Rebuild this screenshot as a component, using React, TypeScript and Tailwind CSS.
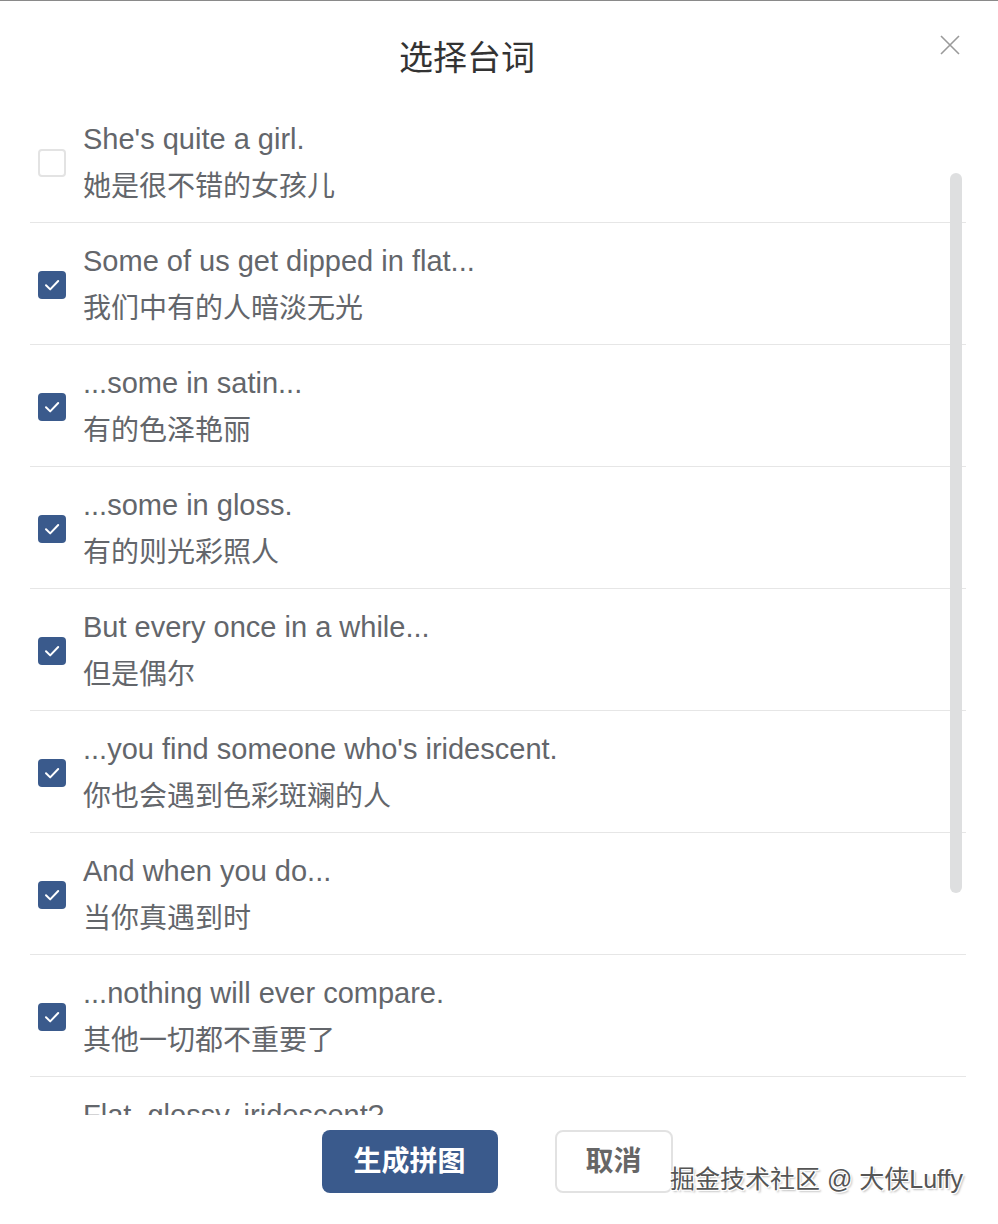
import React from "react";

const rows: { en: string; zh: string; checked: boolean }[] = [
  { en: "She's quite a girl.", zh: "她是很不错的女孩儿", checked: false },
  { en: "Some of us get dipped in flat...", zh: "我们中有的人暗淡无光", checked: true },
  { en: "...some in satin...", zh: "有的色泽艳丽", checked: true },
  { en: "...some in gloss.", zh: "有的则光彩照人", checked: true },
  { en: "But every once in a while...", zh: "但是偶尔", checked: true },
  { en: "...you find someone who's iridescent.", zh: "你也会遇到色彩斑斓的人", checked: true },
  { en: "And when you do...", zh: "当你真遇到时", checked: true },
  { en: "...nothing will ever compare.", zh: "其他一切都不重要了", checked: true },
  { en: "Flat, glossy, iridescent?", zh: "平淡、光鲜、绚丽？", checked: true },
];

function Checkbox({ checked }: { checked: boolean }) {
  if (!checked) {
    return <div className="w-[28px] h-[28px] shrink-0 rounded-[4px] border-2 border-[#e3e3e3] bg-white" />;
  }
  return (
    <div className="w-[28px] h-[28px] shrink-0 rounded-[4px] bg-[#3a5a8c] flex items-center justify-center">
      <svg width="28" height="28" viewBox="0 0 28 28" fill="none">
        <path d="M8 14.3 L12.2 18.4 L20.2 10" stroke="#fff" strokeWidth="2" strokeLinecap="round" strokeLinejoin="round" />
      </svg>
    </div>
  );
}

export default function App() {
  return (
    <div
      className="relative w-full h-[1224px] bg-white border-t border-[#8a8a8a] overflow-hidden"
      style={{ fontFamily: '"Liberation Sans", "Noto Sans CJK SC", sans-serif' }}
    >
      <div className="relative h-[100px] pt-[14px] pr-[64px] flex items-center justify-center">
        <div className="text-[34px] leading-[48px] text-[#333]">选择台词</div>
        <button className="absolute left-[940px] top-[34px] w-[20px] h-[20px]">
          <svg width="20" height="20" viewBox="0 0 20 20" fill="none">
            <path d="M1 1 L19 19 M19 1 L1 19" stroke="#9a9a9a" strokeWidth="1.6" />
          </svg>
        </button>
      </div>

      <div className="relative ml-[30px] w-[936px] h-[1014px] overflow-hidden">
        {rows.map((r, i) => (
          <div key={i} className="flex items-center border-b border-[#e6e6e6] pt-[14px] pb-[11px]">
            <div className="pl-[8px] pr-[17px] flex items-center">
              <Checkbox checked={r.checked} />
            </div>
            <div className="flex flex-col leading-[48px] text-[#63666b]">
              <div className="text-[29px]">{r.en}</div>
              <div className="text-[28px]">{r.zh}</div>
            </div>
          </div>
        ))}
        <div className="absolute left-[920px] top-[72px] w-[12px] h-[720px] rounded-full bg-[#dedfe0]" />
      </div>

      <div className="flex justify-center gap-[57px] pt-[15px] pr-[4px]">
        <button className="w-[176px] h-[63px] rounded-[8px] bg-[#3a5a8c] text-white text-[28px] font-bold">
          生成拼图
        </button>
        <button className="w-[118px] h-[63px] rounded-[8px] border-2 border-[#e2e2e2] bg-white text-[#666] text-[28px] font-bold">
          取消
        </button>
      </div>

      <div
        className="absolute left-[670px] top-[1158px] text-[25px] leading-[40px] text-[#555]"
        style={{ textShadow: "1px 1px 0 #fff, -1px -1px 0 #fff, 1px -1px 0 #fff, -1px 1px 0 #fff, 2px 2px 2px rgba(0,0,0,0.25)" }}
      >
        掘金技术社区 @ 大侠Luffy
      </div>
    </div>
  );
}
